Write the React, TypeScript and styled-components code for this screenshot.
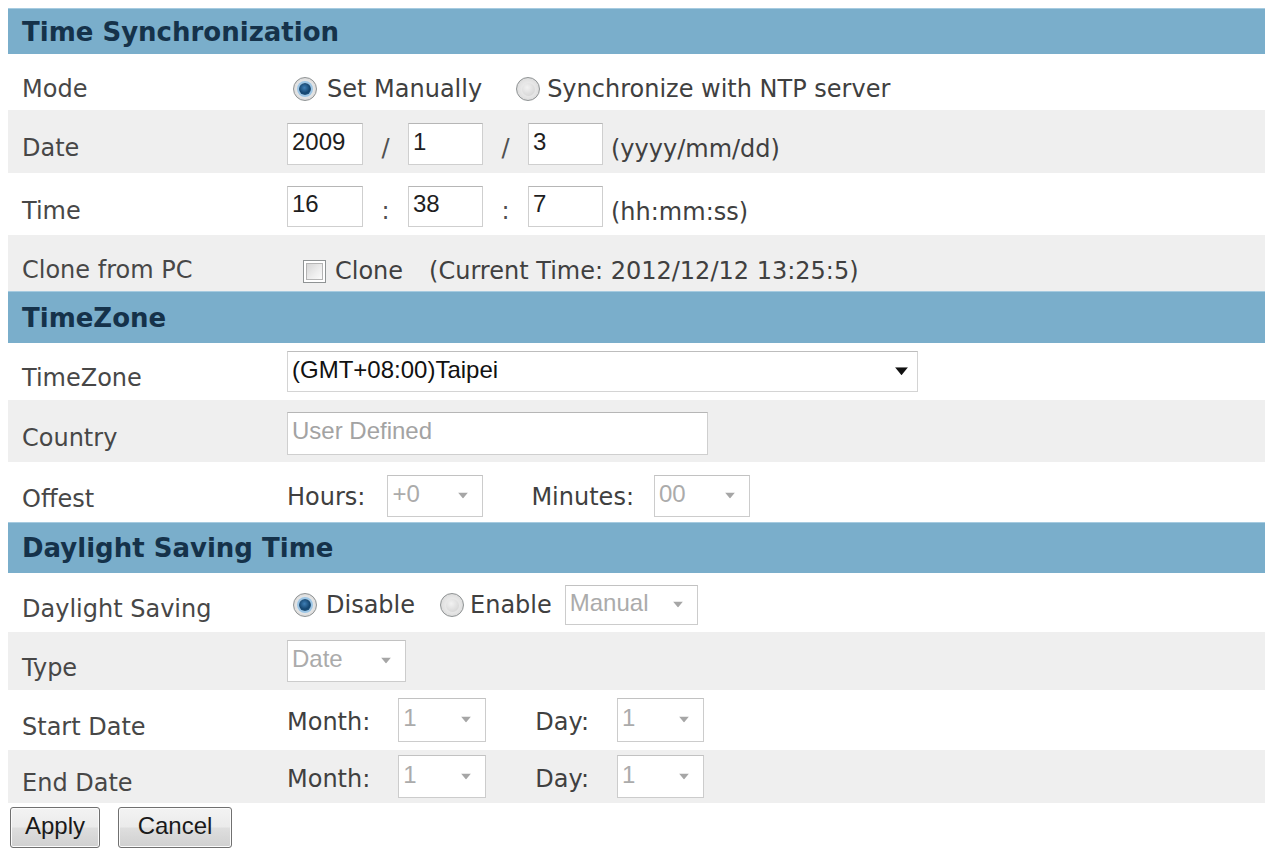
import React from 'react';
import styled, { createGlobalStyle } from 'styled-components';

const GlobalStyle = createGlobalStyle`
  html, body { margin: 0; padding: 0; background: #ffffff; }
  body { font-family: "DejaVu Sans", Verdana, sans-serif; }
`;

const Page = styled.div`
  padding: 8px 0 0 8px;
  width: 1257px;
`;

const Table = styled.div`
  display: flex;
  flex-direction: column;
`;

const SectionHeader = styled.div<{ $h: number }>`
  height: ${(p) => p.$h}px;
  box-sizing: border-box;
  background: #7aaecb;
  border-top: 1px solid #a6cbe0;
  display: flex;
  align-items: center;
  padding: 0 14px;
  font-family: "DejaVu Sans", Verdana, sans-serif;
  font-weight: bold;
  font-size: 26px;
  color: #15324a;
`;

const Row = styled.div<{ $h: number; $shade?: boolean }>`
  height: ${(p) => p.$h}px;
  background: ${(p) => (p.$shade ? '#efefef' : '#ffffff')};
  display: grid;
  grid-template-columns: 279px 1fr;
  align-items: center;
`;

const Label = styled.div`
  padding: 13px 0 0 14px;
  font-size: 24px;
  color: #474747;
  white-space: nowrap;
`;

const Value = styled.div<{ $offset?: number }>`
  display: flex;
  align-items: center;
  padding-top: ${(p) => p.$offset ?? 0}px;
  font-size: 24px;
  color: #404040;
  white-space: nowrap;
`;

const Choice = styled.label<{ $ml?: number; $gap?: number }>`
  display: inline-flex;
  align-items: center;
  gap: ${(p) => p.$gap ?? 9}px;
  margin-left: ${(p) => p.$ml ?? 0}px;
`;

const RadioDot = styled.span<{ $checked?: boolean }>`
  width: 24px;
  height: 24px;
  box-sizing: border-box;
  border-radius: 50%;
  border: 1px solid #8f9394;
  background: radial-gradient(circle at 50% 50%, #f6f6f6 0%, #e2e2e2 60%, #c9c9c9 100%);
  display: inline-flex;
  align-items: center;
  justify-content: center;
  &::after {
    content: '';
    width: ${(p) => (p.$checked ? 12 : 13)}px;
    height: ${(p) => (p.$checked ? 12 : 13)}px;
    border-radius: 50%;
    background: ${(p) =>
      p.$checked
        ? 'radial-gradient(circle at 45% 40%, #3f7fb6 0%, #14456f 55%, #2e6a9a 100%)'
        : 'radial-gradient(circle at 40% 35%, #f2f2f2 0%, #d9d9d9 70%, #cfcfcf 100%)'};
    box-shadow: ${(p) => (p.$checked ? '0 0 0 2px #9cc6e6' : 'none')};
  }
`;

const CheckBox = styled.span`
  width: 23px;
  height: 23px;
  box-sizing: border-box;
  border: 1px solid #8f9394;
  background: #ffffff;
  padding: 2px;
  display: inline-flex;
  &::after {
    content: '';
    flex: 1;
    border: 1px solid #b4b4b4;
    background: linear-gradient(135deg, #d6d6d6 0%, #eeeeee 60%, #fbfbfb 100%);
  }
`;

const Text = styled.span<{ $ml?: number; $mt?: number }>`
  margin-left: ${(p) => p.$ml ?? 0}px;
  padding-top: ${(p) => p.$mt ?? 0}px;
`;

const TextBox = styled.input<{ $w: number; $h?: number }>`
  width: ${(p) => p.$w}px;
  height: ${(p) => p.$h ?? 42}px;
  box-sizing: border-box;
  border: 1px solid #cfcfcf;
  border-top-color: #b6b6b6;
  background: #ffffff;
  padding: 0 0 5px 4px;
  margin: 0;
  font-family: "Liberation Sans", Arial, sans-serif;
  font-size: 24px;
  color: #1e1e1e;
  outline: none;
  &::placeholder {
    color: #a3a3a3;
  }
`;

const Sep = styled.span`
  width: 45px;
  text-align: center;
  padding-top: 8px;
  color: #505050;
`;

const SelectWrap = styled.span<{ $w: number; $h?: number; $ml?: number }>`
  position: relative;
  display: inline-block;
  width: ${(p) => p.$w}px;
  height: ${(p) => p.$h ?? 42}px;
  margin-left: ${(p) => p.$ml ?? 0}px;
`;

const SelectBox = styled.select<{ $active?: boolean }>`
  appearance: none;
  -webkit-appearance: none;
  width: 100%;
  height: 100%;
  box-sizing: border-box;
  margin: 0;
  border: 1px solid ${(p) => (p.$active ? '#d4d4d4' : '#cccccc')};
  border-top-color: ${(p) => (p.$active ? '#bdbdbd' : '#c2c2c2')};
  border-radius: 0;
  background: #ffffff;
  padding: 0 0 5px 4px;
  font-family: "Liberation Sans", Arial, sans-serif;
  font-size: 24px;
  color: ${(p) => (p.$active ? '#111111' : '#ababab')};
  opacity: 1;
  outline: none;
  &:disabled {
    color: #ababab;
    background: #ffffff;
    opacity: 1;
  }
`;

const Arrow = styled.svg<{ $right: number }>`
  position: absolute;
  right: ${(p) => p.$right}px;
  top: 50%;
  transform: translateY(-60%);
  pointer-events: none;
`;

const Select: React.FC<{
  w: number;
  h?: number;
  ml?: number;
  value: string;
  active?: boolean;
}> = ({ w, h, ml, value, active }) => (
  <SelectWrap $w={w} $h={h} $ml={ml}>
    <SelectBox $active={active} disabled={!active} defaultValue={value}>
      <option value={value}>{value}</option>
    </SelectBox>
    {active ? (
      <Arrow $right={10} width="13" height="8" viewBox="0 0 13 8">
        <path d="M0 0 H13 L6.5 8 Z" fill="#111111" />
      </Arrow>
    ) : (
      <Arrow $right={15} width="10" height="6" viewBox="0 0 10 6">
        <path d="M0 0 H10 L5 6 Z" fill="#a6a6a6" />
      </Arrow>
    )}
  </SelectWrap>
);

const ButtonBar = styled.div`
  display: flex;
  gap: 18px;
  padding: 4px 0 0 2px;
`;

const Button = styled.button<{ $w: number }>`
  width: ${(p) => p.$w}px;
  height: 41px;
  box-sizing: border-box;
  border: 1px solid #707070;
  border-radius: 3px;
  background: linear-gradient(#f3f3f3 0%, #ebebeb 48%, #dedede 52%, #d0d0d0 100%);
  box-shadow: inset 0 0 0 1px #fbfbfb;
  font-family: "Liberation Sans", Arial, sans-serif;
  font-size: 24px;
  color: #1a1a1a;
  padding: 0 0 3px;
  margin: 0;
`;

export default function App() {
  return (
    <Page>
      <GlobalStyle />
      <Table>
        <SectionHeader $h={46}>Time Synchronization</SectionHeader>
        <Row $h={56}>
          <Label>Mode</Label>
          <Value $offset={14}>
            <Choice $ml={6} $gap={10}>
              <RadioDot $checked />
              Set Manually
            </Choice>
            <Choice $ml={34} $gap={7}>
              <RadioDot />
              Synchronize with NTP server
            </Choice>
          </Value>
        </Row>
        <Row $h={63} $shade>
          <Label>Date</Label>
          <Value $offset={5}>
            <TextBox $w={76} defaultValue="2009" readOnly />
            <Sep>/</Sep>
            <TextBox $w={75} defaultValue="1" readOnly />
            <Sep>/</Sep>
            <TextBox $w={75} defaultValue="3" readOnly />
            <Text $ml={8} $mt={10}>(yyyy/mm/dd)</Text>
          </Value>
        </Row>
        <Row $h={62}>
          <Label>Time</Label>
          <Value $offset={5}>
            <TextBox $w={76} $h={41} defaultValue="16" readOnly />
            <Sep>:</Sep>
            <TextBox $w={75} $h={41} defaultValue="38" readOnly />
            <Sep>:</Sep>
            <TextBox $w={75} $h={41} defaultValue="7" readOnly />
            <Text $ml={8} $mt={10}>(hh:mm:ss)</Text>
          </Value>
        </Row>
        <Row $h={56} $shade>
          <Label>Clone from PC</Label>
          <Value $offset={16}>
            <Choice $ml={16} $gap={9}>
              <CheckBox />
              Clone
            </Choice>
            <Text $ml={26}>(Current Time: 2012/12/12 13:25:5)</Text>
          </Value>
        </Row>
        <SectionHeader $h={52}>TimeZone</SectionHeader>
        <Row $h={57}>
          <Label>TimeZone</Label>
          <Value>
            <Select w={631} h={41} value="(GMT+08:00)Taipei" active />
          </Value>
        </Row>
        <Row $h={62} $shade>
          <Label>Country</Label>
          <Value $offset={5}>
            <TextBox $w={421} $h={43} placeholder="User Defined" disabled />
          </Value>
        </Row>
        <Row $h={60}>
          <Label>Offest</Label>
          <Value $offset={8}>
            <Text $mt={2}>Hours:</Text>
            <Select w={96} ml={22} value="+0" />
            <Text $ml={48} $mt={2}>Minutes:</Text>
            <Select w={96} ml={20} value="00" />
          </Value>
        </Row>
        <SectionHeader $h={51}>Daylight Saving Time</SectionHeader>
        <Row $h={59}>
          <Label>Daylight Saving</Label>
          <Value $offset={5}>
            <Choice $ml={6} $gap={9}>
              <RadioDot $checked />
              Disable
            </Choice>
            <Choice $ml={25} $gap={6}>
              <RadioDot />
              Enable
            </Choice>
            <Select w={133} h={40} ml={13} value="Manual" />
          </Value>
        </Row>
        <Row $h={58} $shade>
          <Label>Type</Label>
          <Value>
            <Select w={119} value="Date" />
          </Value>
        </Row>
        <Row $h={60}>
          <Label>Start Date</Label>
          <Value>
            <Text $mt={4}>Month:</Text>
            <Select w={88} h={44} ml={28} value="1" />
            <Text $ml={49} $mt={4}>Day:</Text>
            <Select w={87} h={44} ml={28} value="1" />
          </Value>
        </Row>
        <Row $h={53} $shade>
          <Label>End Date</Label>
          <Value>
            <Text $mt={4}>Month:</Text>
            <Select w={88} h={43} ml={28} value="1" />
            <Text $ml={49} $mt={4}>Day:</Text>
            <Select w={87} h={43} ml={28} value="1" />
          </Value>
        </Row>
      </Table>
      <ButtonBar>
        <Button $w={90}>Apply</Button>
        <Button $w={114}>Cancel</Button>
      </ButtonBar>
    </Page>
  );
}
